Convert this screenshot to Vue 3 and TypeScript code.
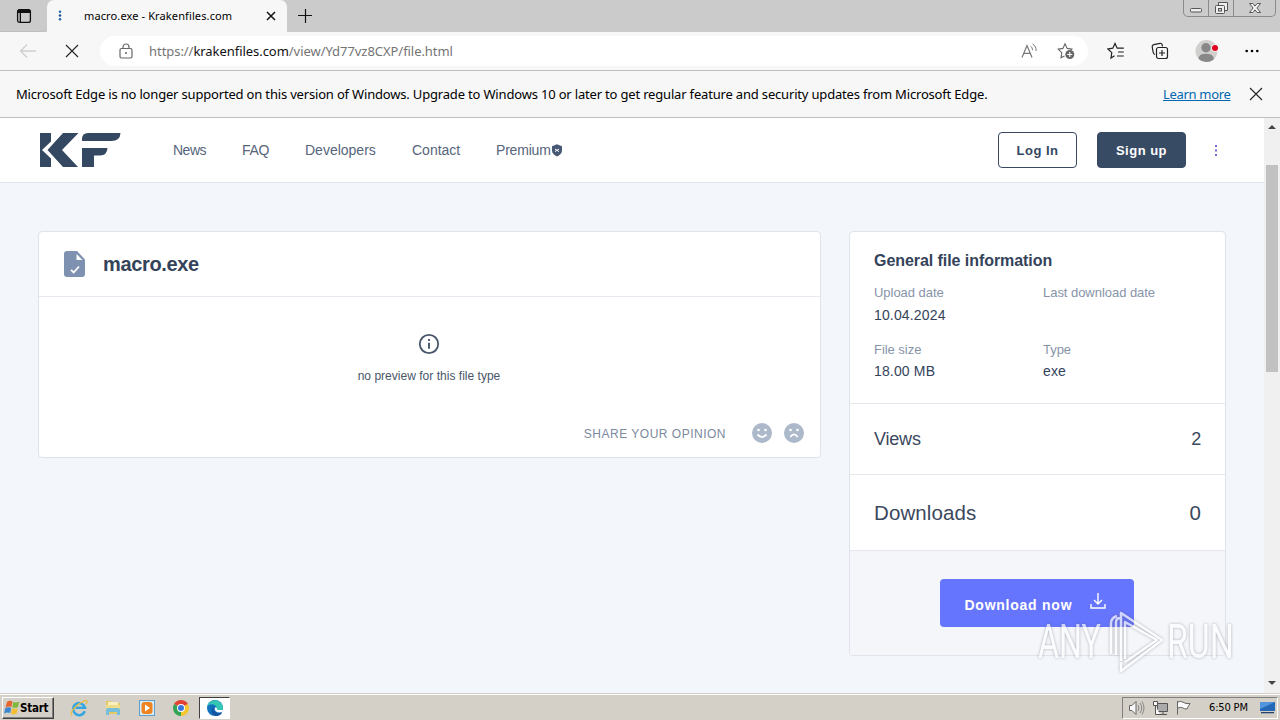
<script setup lang="ts">
interface Detail {
  label: string
  value: string
}

const navItems: string[] = ['News', 'FAQ', 'Developers', 'Contact', 'Premium']

const details: Detail[] = [
  { label: 'Upload date', value: '10.04.2024' },
  { label: 'Last download date', value: '' },
  { label: 'File size', value: '18.00 MB' },
  { label: 'Type', value: 'exe' },
]
</script>

<template>
  <div class="screen">
    <header class="tabstrip">
      <div class="tab-actions">
        <svg width="16" height="16" viewBox="0 0 16 16"><rect x="1.6" y="1.6" width="12.8" height="12.8" rx="2" fill="none" stroke="#111" stroke-width="1.3" /><path d="M1.5 5V3q0-1.5 1.5-1.5h10q1.5 0 1.5 1.5v2H5v9H3.700V5z" fill="#111" /></svg>
      </div>
      <div class="tab">
        <svg class="favicon" width="4" height="12" viewBox="0 0 4 12"><circle cx="2" cy="1.700" r="1.300" fill="#2a6cae" /><circle cx="2" cy="5.500" r="1.300" fill="#1d4f8c" /><circle cx="2" cy="9.300" r="1.300" fill="#2a6cae" /></svg>
        <span class="tab-title">macro.exe - Krakenfiles.com</span>
        <svg class="tab-close" width="10" height="10" viewBox="0 0 10 10"><path d="M1 1l8 8M9 1L1 9" stroke="#111" stroke-width="1.500" /></svg>
      </div>
      <svg class="new-tab" width="16" height="16" viewBox="0 0 16 16"><path d="M8.500 1v14M1 7.500h14" stroke="#111" stroke-width="1.200" /></svg>
      <div class="window-controls">
        <span><svg width="24" height="16" viewBox="0 0 24 16"><rect x="6.500" y="8.500" width="11" height="3.500" rx="1" fill="#eee" stroke="#555" /></svg></span>
        <span><svg width="24" height="16" viewBox="0 0 24 16"><path d="M9.500 5.500v-3h9v8h-3" fill="#eee" stroke="#555" /><rect x="6.500" y="5.500" width="9" height="8" rx="1" fill="#eee" stroke="#555" /><rect x="9.500" y="8.500" width="3" height="2.500" fill="#ccc" stroke="#555" /></svg></span>
        <span><svg width="41" height="16" viewBox="0 0 41 16"><path d="M15.500 3.500h3.300l2.200 2.600 2.200-2.600h3.300l-3.600 4.500 3.600 4.500h-3.300L21 9.900l-2.200 2.600h-3.300L19.100 8z" fill="#f4f4f4" stroke="#555" /></svg></span>
      </div>
    </header>

    <div class="toolbar">
      <svg class="back" width="18" height="16" viewBox="0 0 18 16"><path d="M17 8H1.500M8 1.500L1.500 8 8 14.500" fill="none" stroke="#cfcfcf" stroke-width="1.300" /></svg>
      <svg class="stop" width="14" height="14" viewBox="0 0 14 14"><path d="M1 1l12 12M13 1L1 13" stroke="#222" stroke-width="1.100" /></svg>
      <div class="address">
        <svg class="lock" width="14" height="16" viewBox="0 0 14 16"><rect x="1" y="5.500" width="12" height="9.500" rx="1.500" fill="none" stroke="#666" stroke-width="1.200" /><path d="M4 5.500V4a3 3 0 016 0v1.500" fill="none" stroke="#666" stroke-width="1.200" /><circle cx="7" cy="10" r="1" fill="#666" /></svg>
        <span class="url">https://<b>krakenfiles.com</b>/view/Yd77vz8CXP/file.html</span>
        <svg class="read" width="17" height="16" viewBox="0 0 17 16"><path d="M1 14.500L6 2.500l5 12M2.800 10.300h6.400" fill="none" stroke="#777" stroke-width="1.200" /><path d="M9.500 3.200q2.200 1.300 2 4M11.500 1q4 2.300 3.600 7" fill="none" stroke="#777" /></svg>
        <svg class="fav-add" width="18" height="18" viewBox="0 0 18 18"><path d="M7.500 14L4 15.800l.8-5.100L1.200 7.200l4.700-.8L8 1.800l2.200 4.600 4.700.7-1.200 1.200" fill="none" stroke="#666" stroke-width="1.100" /><circle cx="12.800" cy="12.500" r="4.500" fill="#666" /><path d="M12.800 10v5M10.300 12.500h5" stroke="#fff" stroke-width="1.100" /></svg>
      </div>
      <svg class="favs" width="18" height="18" viewBox="0 0 18 18"><path d="M7.500 13.800L4 16l.8-5.400L1 7l4.800-.8L8 1.500l2.200 4.700h6.600M11 10h5.800M10 14h6.800" fill="none" stroke="#222" stroke-width="1.200" /></svg>
      <svg class="collections" width="18" height="18" viewBox="0 0 18 18"><path d="M4 12.500Q2.500 12 2.200 10.500L1.200 4.800Q1 3 2.800 2.600L9 1.300q1.800-.3 2.200 1.500l.3 1.700" fill="none" stroke="#222" stroke-width="1.200" /><rect x="5.500" y="5.500" width="11" height="11" rx="2" fill="#f7f7f7" stroke="#222" stroke-width="1.200" /><path d="M11 8v6M8 11h6" stroke="#222" stroke-width="1.200" /></svg>
      <svg class="profile" width="24" height="24" viewBox="0 0 24 24"><circle cx="11.500" cy="12" r="11" fill="#d0d0ce" /><circle cx="11" cy="8.700" r="4.700" fill="#888" /><path d="M3.500 20q0-5.200 7.500-5.200t8 5.200q-3 3-7.500 3t-8-3z" fill="#888" /><circle cx="20" cy="9" r="3.800" fill="#f7f7f7" /><circle cx="20" cy="9" r="3" fill="#e3001b" /></svg>
      <svg class="more" width="14" height="4" viewBox="0 0 14 4"><circle cx="1.700" cy="2" r="1.300" /><circle cx="7" cy="2" r="1.300" /><circle cx="12.300" cy="2" r="1.300" /></svg>
    </div>

    <div class="notice">
      <span class="notice-text">Microsoft Edge is no longer supported on this version of Windows. Upgrade to Windows 10 or later to get regular feature and security updates from Microsoft Edge.</span>
      <a class="learn">Learn more</a>
      <svg width="14" height="14" viewBox="0 0 14 14"><path d="M1 1l12 12M13 1L1 13" stroke="#222" stroke-width="1.100" /></svg>
    </div>

    <div class="viewport">
      <div class="page">
        <header class="site-header">
          <svg class="logo" width="82" height="35" viewBox="0 0 82 35"><g fill="#354861"><path d="M1 0h11v8.500L3 17l9 8.500V34H1z" /><path d="M24 0h15.500L23 17l16 17H24L8.500 17z" /><path d="M49 0h32.500q-.500 8-9 8H43V6q0-6 6-6z" /><path d="M43 15h25.500q-.500 7.500-7.500 7.500h-6V34H43z" /></g></svg>
          <nav class="nav">
            <a v-for="item in navItems" :key="item">{{ item }}<svg v-if="item === 'Premium'" width="12" height="13" viewBox="0 0 12 13"><path d="M6 .300l5 2v4q0 4-5 6.300Q1 10.300 1 6.300v-4z" fill="#465873" /><path d="M4 5l4 2.600M8 5L4 7.600" stroke="#fff" stroke-width="1" /></svg></a>
          </nav>
          <button class="btn login">Log In</button>
          <button class="btn signup">Sign up</button>
          <svg class="dots" width="4" height="13" viewBox="0 0 4 13"><path d="M1 1h2v2H1zM1 5.500h2v2H1zM1 10h2v2H1z" fill="#7668d8" /></svg>
        </header>

        <main class="content">
          <section class="card file-card">
            <div class="file-head">
              <svg width="22" height="27" viewBox="0 0 22 27"><path d="M3 0h10l8 8.500V23q0 3-3 3H3q-3 0-3-3V3q0-3 3-3z" fill="#7e91b0" /><path d="M12.500 3l6 6h-6z" fill="#fff" /><path d="M7 18.800l2.700 2.700 5.300-6" fill="none" stroke="#fff" stroke-width="1.800" /></svg>
              <h1>macro.exe</h1>
            </div>
            <div class="preview">
              <svg width="22" height="22" viewBox="0 0 22 22"><circle cx="11" cy="11" r="9.200" fill="none" stroke="#48566b" stroke-width="1.800" /><path d="M11 9.800v6M11 6v2" stroke="#48566b" stroke-width="1.900" /></svg>
              <p>no preview for this file type</p>
            </div>
            <div class="opinion">
              <span>SHARE YOUR OPINION</span>
              <svg v-for="mood in ['happy', 'sad']" :key="mood" width="20" height="20" viewBox="0 0 20 20"><circle cx="10" cy="10" r="10" fill="#acb9ca" /><circle cx="6.500" cy="7" r="1.300" fill="#fff" /><circle cx="13.500" cy="7" r="1.300" fill="#fff" /><path v-if="mood === 'happy'" d="M5.500 11.500q4.500 5 9 0" fill="none" stroke="#fff" stroke-width="1.900" /><path v-else d="M6.300 14q3.700-5.200 7.400 0" fill="none" stroke="#fff" stroke-width="1.900" /></svg>
            </div>
          </section>

          <aside class="card info-card">
            <div class="info">
              <h2>General file information</h2>
              <dl>
                <div v-for="d in details" :key="d.label"><dt>{{ d.label }}</dt><dd>{{ d.value }}</dd></div>
              </dl>
            </div>
            <div class="stat views"><span>Views</span><span>2</span></div>
            <div class="stat downloads"><span>Downloads</span><span>0</span></div>
            <div class="download-area">
              <button class="download"><span>Download now</span><svg width="16" height="18" viewBox="0 0 16 18"><path d="M8 1v10.500M4 8l4 4 4-4M1 12v4h14v-4" fill="none" stroke="#fff" stroke-width="1.400" /></svg></button>
            </div>
          </aside>
        </main>
      </div>
      <div class="scrollbar">
        <svg width="8" height="4" viewBox="0 0 8 4"><path d="M4 0l4 4H0z" fill="#444" /></svg>
        <div class="thumb"></div>
        <svg class="arrow-down" width="8" height="4" viewBox="0 0 8 4"><path d="M0 0h8L4 4z" fill="#444" /></svg>
      </div>
    </div>

    <footer class="taskbar">
      <div class="start">
        <svg width="16" height="15" viewBox="0 0 16 15"><path d="M3 2q3-2 5.500-.5L7.500 7Q5 5.800 1.500 7.500z" fill="#e5652d" /><path d="M9.300 2q3 1.200 6-.500L14 7q-3 1.500-5.700.4z" fill="#80b83b" /><path d="M1.300 8.300Q4.500 6.600 7.200 8l-1 5Q3.500 11.800 0 13.500z" fill="#3c86d0" /><path d="M8.200 8.300q3 1.300 5.700-.3l-1.300 5.500q-3 1.500-5.500.2z" fill="#f3bd30" /></svg>
        <span>Start</span>
      </div>
      <svg class="app ie" width="18" height="18" viewBox="0 0 18 18"><path d="M14.800 12.300a6 6 0 11.200-3.600H5.500" fill="none" stroke="#35a5df" stroke-width="2.600" /><path d="M2 16.500Q-1 13 8 5.500 16 0 17 2q.5 1-1 3" fill="none" stroke="#e9bd45" stroke-width="1.300" /></svg>
      <svg class="app" width="18" height="18" viewBox="0 0 18 18"><path d="M2 2h5l1.500 2H16v11H2z" fill="#e4c865" /><path d="M4 3h10v5H4z" fill="#f7efbd" /><path d="M2 6h14v6H2z" fill="#f0dc88" /><path d="M2 16V11q0-2 2-2h10q2 0 2 2v5h-3v-3H5v3z" fill="#75bfdd" /></svg>
      <svg class="app" width="18" height="18" viewBox="0 0 18 18"><rect x="1.500" y="1.500" width="15" height="15" fill="#dcecf7" stroke="#61a0ce" /><rect x="3.500" y="3" width="11" height="12" rx="3" fill="#ee8421" /><path d="M7 5.500l5 3.500-5 3.500z" fill="#fff" /></svg>
      <svg class="app" width="18" height="18" viewBox="0 0 18 18"><path d="M9 9L2.100 5A8 8 0 0115.900 5z" fill="#e34133" /><path d="M9 9l6.900-4A8 8 0 019 17z" fill="#f7c52c" /><path d="M9 9v8A8 8 0 012.100 5z" fill="#35a353" /><circle cx="9" cy="9" r="4" fill="#fff" /><circle cx="9" cy="9" r="3" fill="#3977e0" /></svg>
      <div class="active-app">
        <svg width="18" height="18" viewBox="0 0 18 18"><circle cx="9" cy="9" r="8" fill="#1273bd" /><path d="M1.200 7.500A8 8 0 0117 9q0 3-4 3-3.500 0-2-2.500Q9.500 5 5.500 5.300 2 5.700 1.200 7.500z" fill="#35c7b4" /><path d="M9.500 7Q6 9 8 12q2.500 3 7.500 1.500 1-.4.600.3Q14 17 10 17 5 15.500 5.500 11 6 8 9.500 7z" fill="#1552a0" /><path d="M9.800 8q-2 2-.2 4 2.700 2.600 6.800.8L18 11h-5q-2.500 0-2-1.500z" fill="#fff" /></svg>
      </div>
      <div class="tray">
        <svg width="17" height="16" viewBox="0 0 17 16"><path d="M1.500 5.500H4l4-4v13l-4-4H1.500z" fill="#f8f8f8" stroke="#666" /><path d="M10 5q2 3 0 6M12 3q3.500 5 0 10M14 1.500q4 6.500 0 13" fill="none" stroke="#888" /></svg>
        <svg width="17" height="16" viewBox="0 0 17 16"><path d="M5.500 3.500h10v8h-10zM7 14.500h8M11 12v2" fill="#aaa" stroke="#555" /><path d="M1.500 1.500h4v4h-4zM3.500 5.500v9H8" fill="#f8f8f8" stroke="#555" /></svg>
        <svg width="17" height="16" viewBox="0 0 17 16"><path d="M2 2q3-1.500 5 .2 2.500 2 7 1.300-2 3-3 5.500-3 0-4.500-1.200T2 8" fill="#fafafa" stroke="#666" /><path d="M1.500 1v13.500" stroke="#666" /></svg>
        <time>6:50 PM</time>
        <svg class="desktop" width="15" height="13" viewBox="0 0 15 13"><path d="M0 1h15v9H0z" fill="#2368b7" /><path d="M0 1h15L0 8z" fill="#5195dc" /><path d="M1 11h13v1.300H1z" fill="#24436b" /></svg>
      </div>
    </footer>

    <svg class="watermark" width="212" height="68" viewBox="0 0 212 68">
      <g class="mark">
        <text x="4" y="50" textLength="63" lengthAdjust="spacingAndGlyphs">ANY</text>
        <text x="133" y="50" textLength="67" lengthAdjust="spacingAndGlyphs">RUN</text>
        <path d="M82 47V14q0-4 5-4M77 46V15q0-5 6-7M87 53V5l41 27-41 31v-9M91 51V14l32 18-32 22" />
      </g>
    </svg>
  </div>
</template>

<style>
body { margin: 0; overflow: hidden; }
</style>

<style scoped>
.screen { position: relative; width: 1280px; height: 720px; display: flex; flex-direction: column; overflow: hidden; font-family: "Noto Sans", "Open Sans", sans-serif; color: #000; background: #f7f7f7; }
svg { display: block; flex: none; }
.screen * { box-sizing: border-box; }
.tabstrip { display: flex; height: 32px; flex: none; background: #cbcbcb; }
.tab-actions { width: 47px; height: 32px; padding: 8px 0 0 16px; border-radius: 0 0 6px 0; border-bottom: 1px solid #bebebe; }
.tab { width: 240px; height: 32px; display: flex; align-items: center; padding-left: 11px; background: #f7f7f7; border-radius: 7px 7px 0 0; }
.tab-title { width: 170px; margin: -1px 0 0 22px; font-size: 11px; white-space: nowrap; letter-spacing: .12px; }
.tab-close { margin-left: 12px; }
.new-tab { margin: 8px 0 0 10px; }
.window-controls { display: flex; height: 17px; margin-left: auto; margin-right: 4px; border: 1px solid #8b8b8b; border-top: 0; border-radius: 0 0 5px 5px; }
.window-controls span + span { border-left: 1px solid #8b8b8b; }
.toolbar { display: flex; align-items: center; height: 39px; flex: none; padding-left: 19px; border-bottom: 1px solid #bfbfbf; background: #f7f7f7; }
.stop { margin-left: 28px; }
.address { width: 988px; height: 30px; margin-left: 21px; display: flex; align-items: center; background: #fff; border-radius: 15px; }
.lock { margin-left: 19px; }
.url { width: 304px; margin-left: 16px; color: #747474; font-size: 13px; white-space: nowrap; letter-spacing: -.05px; }
.url b { color: #111; font-weight: 400; }
.read { margin-left: 568px; }
.fav-add { margin-left: 19px; }
.favs { margin-left: 19px; }
.collections { margin-left: 26px; }
.profile { margin-left: 26px; }
.more { margin-left: 26px; }
.notice { display: flex; align-items: center; height: 47px; flex: none; padding-left: 16px; border-bottom: 1px solid #bfbfbf; font-size: 13px; background: #f7f7f7; }
.notice-text { width: 1147px; margin-top: -1px; white-space: nowrap; letter-spacing: -.178px; }
.learn { width: 68px; margin: -1px 18px 0 0; color: #0067b0; text-decoration: underline; white-space: nowrap; letter-spacing: -.32px; }
.viewport { display: flex; height: 575px; flex: none; font-family: "Liberation Sans", Arial, sans-serif; }
.page { width: 1264px; background: #f3f6fa; }
.site-header { display: flex; align-items: center; height: 65px; padding-left: 39px; background: #fff; border-bottom: 1px solid #e2e5ee; }
.nav { display: grid; grid-template-columns: 69px 63px 107px 84px 1fr; width: 825px; margin-left: 52px; color: #56657b; font-size: 14px; }
.nav a { display: flex; align-items: center; }
.nav a:first-child { letter-spacing: -.5px; }
.nav a:nth-child(2) { letter-spacing: -.3px; }
.nav a:last-child { letter-spacing: -.2px; }
.btn { height: 36px; padding: 0; font: bold 13px "Liberation Sans", Arial, sans-serif; letter-spacing: .5px; border: 1px solid #38485f; border-radius: 4px; }
.login { width: 79px; color: #354861; background: #fff; }
.signup { width: 89px; margin-left: 20px; color: #fff; background: #384b65; }
.dots { margin-left: 28px; }
.content { display: flex; align-items: flex-start; gap: 28px; padding: 48px 0 0 38px; }
.card { border: 1px solid #dfe3ec; border-radius: 4px; background: #fff; }
.file-card { width: 783px; height: 227px; }
.file-head { display: flex; align-items: center; gap: 17px; height: 65px; padding-left: 25px; border-bottom: 1px solid #e6e9f0; }
h1 { margin: 0; font-size: 20px; color: #34435a; letter-spacing: -.35px; }
.preview { display: flex; flex-direction: column; align-items: center; padding: 36px 1px 0 0; height: 126px; }
.preview p { margin: 14px 0 0; font-size: 12px; line-height: 14px; color: #48566b; letter-spacing: .02px; }
.opinion { display: flex; align-items: center; justify-content: flex-end; gap: 12px; padding-right: 16px; height: 20px; color: #7c899e; font-size: 12px; }
.opinion span { margin: 1px 14px 0 0; letter-spacing: .5px; }
.info-card { width: 377px; height: 425px; display: flex; flex-direction: column; overflow: hidden; }
.info { height: 172px; padding: 19px 24px 0; border-bottom: 1px solid #e4e7ee; }
h2 { margin: 0; font-size: 16px; line-height: 20px; color: #34435a; letter-spacing: -.06px; }
dl { display: grid; grid-template-columns: 169px 1fr; grid-template-rows: 57px 50px; margin: 13px 0 0; }
dt { font-size: 13px; line-height: 17px; color: #8794a8; letter-spacing: -.04px; }
dd { margin: 5px 0 0; font-size: 14px; line-height: 17px; color: #34435a; letter-spacing: .15px; }
dl div:first-child dd { margin-top: 6px; }
.stat { display: flex; align-items: center; justify-content: space-between; padding: 0 24px; color: #3b485d; border-bottom: 1px solid #e4e7ee; }
.views { height: 71px; font-size: 18px; letter-spacing: -.2px; }
.downloads { height: 76px; font-size: 20.500px; letter-spacing: .1px; }
.download-area { flex: 1; display: flex; align-items: flex-start; justify-content: center; padding: 28px 2px 0 0; background: #f4f6fa; }
.download { display: flex; align-items: center; width: 194px; height: 48px; padding: 3px 0 0 25px; border: 0; border-radius: 4px; background: #6675fd; color: #fff; font: bold 14px "Liberation Sans", Arial, sans-serif; letter-spacing: .75px; }
.download span { width: 125px; text-align: left; white-space: nowrap; }
.download svg { margin-top: -7px; }
.scrollbar { width: 16px; padding-top: 7px; display: flex; flex-direction: column; align-items: center; background: #f0f0f0; }
.thumb { width: 12px; height: 207px; margin-top: 36px; background: #c1c1c1; }
.arrow-down { margin-top: auto; margin-bottom: 8px; }
.taskbar { display: flex; align-items: center; height: 27px; flex: none; background: #d4d0c8; border-top: 1px solid #d4d0c8; box-shadow: inset 0 1px #fff; padding: 1px 2px 0; font-family: "DejaVu Sans Condensed", "DejaVu Sans", sans-serif; }
.start { display: flex; align-items: center; gap: 0; width: 52px; height: 22px; padding-left: 1px; font-size: 11.500px; font-weight: bold; border: 1px solid; border-color: #fff #404040 #404040 #fff; box-shadow: inset -1px -1px #808080; }
.start span { letter-spacing: -.25px; }
.app { margin-left: 16px; }
.active-app { width: 31px; height: 22px; display: grid; place-items: center; margin-left: 9px; background: #fff; border: 1px solid; border-color: #404040 #fff #fff #404040; }
.tray { display: flex; align-items: center; width: 156px; height: 22px; margin-left: auto; padding-left: 5px; gap: 7px; border: 1px solid; border-color: #808080 #fff #fff #808080; }
.tray time { width: 42px; margin-left: 9px; font-size: 11px; white-space: nowrap; letter-spacing: -.15px; }
.desktop { margin-left: 2px; }
.watermark { position: absolute; left: 1034px; top: 608px; pointer-events: none; }
.mark { filter: drop-shadow(0 0 1.5px rgba(80, 80, 90, .6)); opacity: .7; }
.mark text { font: 49px Roboto, sans-serif; fill: #fff; }
.mark path { fill: none; stroke: #fff; stroke-width: 2.5; stroke-linejoin: round; }
</style>
